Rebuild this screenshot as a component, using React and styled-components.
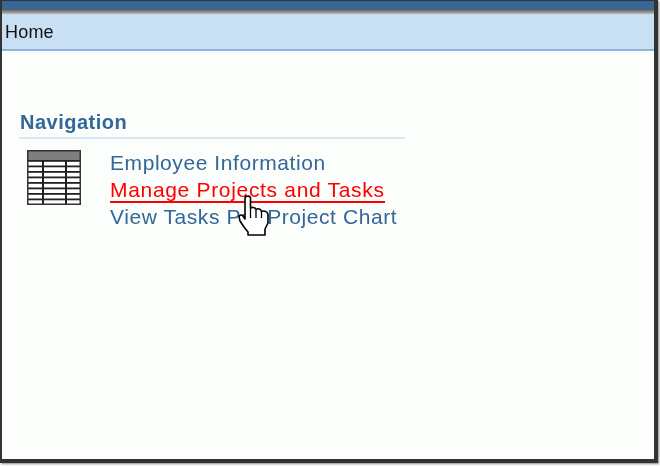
import React from "react";
import styled, { createGlobalStyle } from "styled-components";

const Global = createGlobalStyle`
  html, body { margin: 0; padding: 0; background: #fff; }
  #root { width: 660px; height: 466px; overflow: hidden; }
`;
const Shadow = styled.div`
  width: 660px; height: 466px; box-sizing: border-box;
  padding: 0 2px 3px 0;
  background: #fff;
  position: relative;
`;
const Frame = styled.div`
  width: 100%; height: 100%; box-sizing: border-box;
  border-style: solid; border-color: #333;
  border-width: 1px 4px 4px 2px;
  box-shadow: 1px 1px 2px #888;
  background: #fbfefb;
  display: flex; flex-direction: column;
  font-family: "Liberation Sans", Arial, sans-serif;
`;
const TopBar = styled.div`
  height: 8px; flex: none; background: #336699;
`;
const Fade = styled.div`
  height: 5px; flex: none; background: linear-gradient(#555, #bbb);
`;
const Crumb = styled.div`
  height: 35px; flex: none; box-sizing: border-box;
  background: #c9dff3;
  padding: 2px 0 0 3px;
  display: flex; align-items: center;
  font-size: 18px; letter-spacing: 0.2px; color: #111;
  filter: blur(0.3px);
`;
const CrumbRule = styled.div`
  height: 2px; flex: none; background: #8fb4dc;
`;
const Content = styled.div`
  flex: 1; padding: 59px 0 0 17px;
`;
const Section = styled.section`
  width: 386px;
`;
const Heading = styled.h2`
  margin: 0; font-size: 20px; line-height: 24px; font-weight: bold; color: #336699;
  letter-spacing: 0.5px;
  padding: 0 0 3px 1px;
  border-bottom: 2px solid #d9e8f6;
  filter: blur(0.3px);
`;
const Body = styled.div`
  display: flex; padding: 11px 0 0 8px;
`;
const Links = styled.nav`
  display: flex; flex-direction: column; align-items: flex-start;
  margin: -1px 0 0 29px;
`;
const NavLink = styled.a`
  display: block; font-size: 21px; line-height: 27px; height: 27px; white-space: nowrap;
  letter-spacing: ${p => (p.$active ? "0.68px" : "0.57px")};
  color: ${p => (p.$active ? "#ff0000" : "#336699")};
  position: relative;
  filter: blur(0.3px);
  ${p => p.$active ? `&::after { content: ""; position: absolute; left: 0; right: 0; top: 24.5px; height: 2px; background: #f00; }` : ""}
`;
const Cursor = styled.svg`
  position: absolute; left: 238px; top: 195px;
`;
function TableIcon() {
  const rows = [10, 15.5, 21, 26.5, 32, 37.5, 43, 48.5];
  return (
    <svg width="54" height="55" viewBox="0 0 54 55" style={{ flex: "none" }}>
      <rect width="54" height="55" fill="#fff" />
      <rect x="1" y="1" width="52" height="9" fill="#7f7f7f" />
      {rows.map(y => <rect key={y} x="1" y={y} width="52" height="1.8" fill="#222" />)}
      <rect x="15" y="10" width="2" height="44" fill="#222" />
      <rect x="38" y="10" width="2" height="44" fill="#222" />
      <rect x="0.75" y="0.75" width="52.5" height="53.5" fill="none" stroke="#333" strokeWidth="1.5" />
    </svg>
  );
}
function Hand() {
  return (
    <Cursor width="32" height="42" viewBox="0 0 32 42">
      <path d="M7 3 C7 0.5 12.5 0.5 12.5 3 V13 C14 12 17 12 18 14.5 C20 13 23 14 23.5 16.5 C25 15.5 29 16 30 19 V28 L27 34 V40 H10 V37 L6 32 L2 26 L1 22 C1.5 19.5 4 19.5 5 21 L7 24 Z" fill="#fff" stroke="#000" strokeWidth="1.6" strokeLinejoin="round" />
      <path d="M12.5 13 V23 M18 14.5 V23 M23.5 16.5 V23" stroke="#000" strokeWidth="1.3" fill="none" />
    </Cursor>
  );
}
export default function App() {
  return (
    <>
      <Global />
      <Shadow>
        <Frame>
          <TopBar />
          <Fade />
          <Crumb>Home</Crumb>
          <CrumbRule />
          <Content>
            <Section>
              <Heading>Navigation</Heading>
              <Body>
                <TableIcon />
                <Links>
                  <NavLink>Employee Information</NavLink>
                  <NavLink $active>Manage Projects and Tasks</NavLink>
                  <NavLink>View Tasks Per Project Chart</NavLink>
                </Links>
              </Body>
            </Section>
          </Content>
        </Frame>
        <Hand />
      </Shadow>
    </>
  );
}
